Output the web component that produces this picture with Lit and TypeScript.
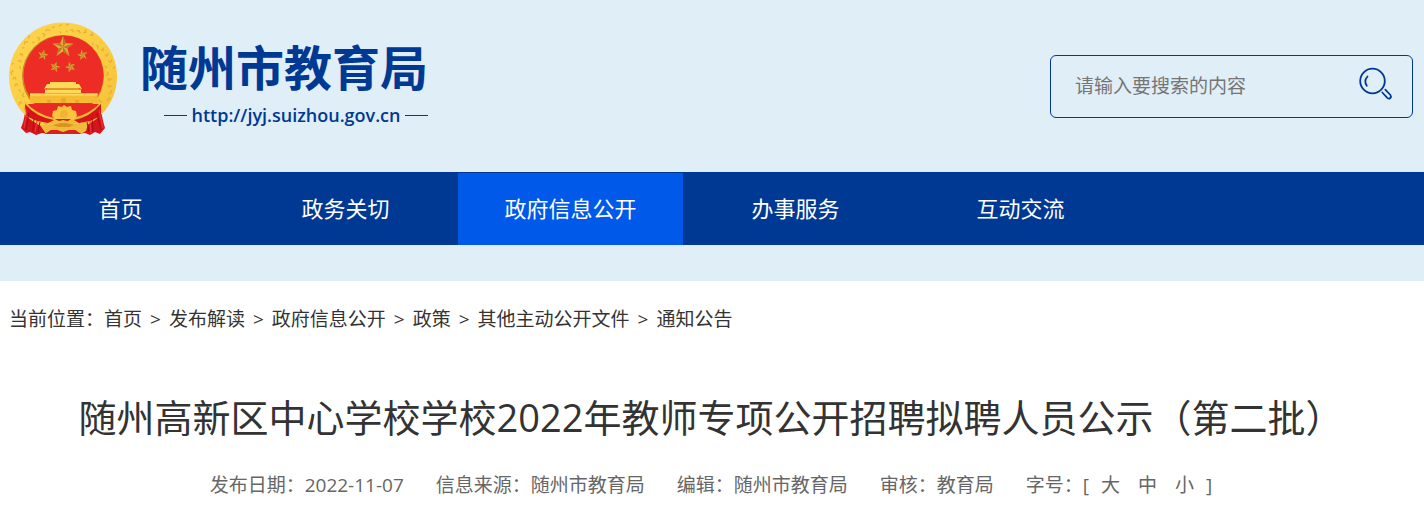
import { LitElement, html, svg, css } from "lit";
import { customElement, state } from "lit/decorators.js";

const star = (cx: number, cy: number, r: number, turn = 0) => {
  const pt = (i: number, radius: number) => {
    const a = ((i * 36 - 90 + turn) * Math.PI) / 180;
    return `${(cx + radius * Math.cos(a)).toFixed(2)},${(cy + radius * Math.sin(a)).toFixed(2)}`;
  };
  const outline = Array.from({ length: 10 }, (_, i) => pt(i, i % 2 ? r * 0.42 : r)).join(" ");
  const facets = [0, 2, 4, 6, 8].map((i) => `M${cx},${cy}L${pt(i, r)}L${pt(i + 1, r * 0.42)}Z`).join("");
  return svg`<polygon points=${outline} fill="#e2ab3a"></polygon><path d=${facets} fill="#b9781f"></path>`;
};

@customElement("national-emblem")
class NationalEmblem extends LitElement {
  static styles = css`
    :host { display: block; flex: none; }
    svg { display: block; width: 108px; height: 114px; }
  `;

  render() {
    const grains = Array.from({ length: 90 }, (_, i) => {
      const a = ((i * 47) % 360) * (Math.PI / 180) + i * 0.03;
      const r = 43 + ((i * 29) % 9);
      const p = (radius: number, d: number) =>
        `${(54 + radius * Math.cos(a + d)).toFixed(1)} ${(54 + radius * Math.sin(a + d)).toFixed(1)}`;
      return `M${p(r, 0)}L${p(r + 1.5, i % 2 ? 0.06 : -0.04)}`;
    }).join("");
    return html`<svg viewBox="0 0 108 114" aria-hidden="true">
      <defs>
        <linearGradient id="gold" x1="0" y1="0" x2="1" y2="1">
          <stop offset="0" stop-color="#fbd150"></stop>
          <stop offset=".3" stop-color="#fdd248"></stop>
          <stop offset="1" stop-color="#f5c038"></stop>
        </linearGradient>
      </defs>
      <path fill="#d8141b" d="M16 80L37 94 44 101 41 112 33 111 27 113 21 110 17 111 12 106Q17 94 16 80ZM92 80L70 94 64 101 68 112 76 111 81 113 86 110 91 112 96 106Q92 94 92 80Z"></path>
      <path fill="#e92a24" d="M36 96H72V112H36Z"></path>
      <circle cx="54" cy="54.500" r="54" fill="url(#gold)"></circle>
      <path d=${grains} stroke="#dfa42a" stroke-width="1.300" stroke-opacity=".7" fill="none"></path>
      <circle cx="54" cy="54" r="41" fill="#c98b22"></circle>
      <circle cx="54.500" cy="53.500" r="40" fill="#ec2c25"></circle>
      <path fill="#e92a24" d="M19 82H90L82 94 65 99H43L26 94Z"></path>
      <path fill="#f6bb31" d="M21 71.500H88.500V81H21Z"></path>
      <path fill="#ffd95c" d="M21 71.500H88.500V73.500H21ZM36 67.500H72V71H36ZM38 62H70L73 67 70 66H38L35 67ZM41 60H67V63H41Z"></path>
      <path fill="#e39a23" d="M38 66H70V67.500H38Z"></path>
      <path fill="#eaa929" d="M52 77Q54.500 74 57 77V81H52ZM38 78H42V81H38ZM66 78H70V81H66Z"></path>
      <path fill="#f3bb32" d="M15 79Q28 93 45 96Q54 99 64 96Q82 92 93 79L89 91Q78 101 64 101L54 98 44 101Q29 101 19 91Z"></path>
      <path fill="#f8c53c" d="M43 94L44 89 48 88 49 84 53 85 55 83 58 85 62 84 63 88 67 89 68 94 64 98H47Z"></path>
      <circle cx="55" cy="92" r="4" fill="#f0b430"></circle>
      <path fill="#d8141b" d="M16 82Q27 95 45 98L39 101 28 99 17 94ZM92 82Q81 95 65 98L70 101 81 99 92 94ZM46 97H62L58 99.500H51Z"></path>
      <path fill="#efbc39" d="M31 103Q40 104 46 100L54 98 63 100Q69 104 79 102L77 109 72 112 66 108 60 108 54 111 48 108 42 108 37 112Z"></path>
      <path fill="#d99323" d="M44 103L52 101H57L65 103 60 105H49Z"></path>
      <path fill="#df1d20" d="M36 112L42 108H48L54 110 60 108H66L72 112Z"></path>
      <path fill="none" stroke="#a90d15" d="M20 91L17 108M25 96L24 110M31 100L29 110M88 91L92 108M83 96L84 110M78 100L80 110"></path>
      <path fill="none" stroke="#f13b37" d="M18 88L15 106M28 99L26 110M90 88L94 106M81 99L82 111"></path>
      ${star(54, 25, 11)} ${star(34, 33, 5.5, 12)} ${star(73.5, 33, 5.5, -12)}
      ${star(46, 45, 5.5, 18)} ${star(61.5, 45, 5.5, -18)}
    </svg>`;
  }
}

@customElement("site-header")
class SiteHeader extends LitElement {
  static styles = css`
    :host { display: block; background: #e0eef7; padding-bottom: 36px; }
    .top {
      display: flex; justify-content: space-between; align-items: flex-start;
      padding: 22px 11px 36px 9px;
    }
    .brand { display: flex; gap: 23px; color: #003993; text-decoration: none; }
    .words { padding-top: 14px; }
    .name { font-size: 48px; line-height: 64px; font-weight: 700; white-space: nowrap; }
    .url {
      display: flex; align-items: center; gap: 5px; padding: 3px 0 0 24px;
      font-size: 18px; line-height: 24px; font-weight: 600;
    }
    .url::before, .url::after { content: ""; flex: 1; height: 1px; background: #003993; }
    .search {
      display: flex; align-items: center; box-sizing: border-box;
      width: 363px; height: 63px; margin-top: 33px; padding: 0 19px 2px 24px;
      border: 1px solid #003993; border-radius: 6px;
    }
    .box {
      flex: 1; min-width: 0; border: 0; padding: 0; outline: 0; background: none;
      font: inherit; font-size: 19px; line-height: 28px; color: #333;
    }
    .box::placeholder { color: #757575; opacity: 1; }
    .go { border: 0; padding: 0 0 6px; background: none; cursor: pointer; color: #003993; }
    .go svg { display: block; width: 36px; height: 36px; }
    .nav { background: #003993; padding: 1px 0 0 8px; }
    .list { display: flex; margin: 0; padding: 0; list-style: none; }
    .item { flex: 0 1 225px; }
    .link {
      display: block; text-align: center; color: #fff; text-decoration: none;
      padding-bottom: 2px; font-size: 22px; line-height: 70px; white-space: nowrap;
    }
    .link.active { background: #0059e8; }
  `;

  private items = ["首页", "政务关切", "政府信息公开", "办事服务", "互动交流"];

  render() {
    return html`
      <div class="top">
        <a class="brand" href="#">
          <national-emblem></national-emblem>
          <div class="words">
            <div class="name">随州市教育局</div>
            <div class="url">http://jyj.suizhou.gov.cn</div>
          </div>
        </a>
        <form class="search" role="search" @submit=${(e: Event) => e.preventDefault()}>
          <input class="box" type="text" aria-label="搜索" placeholder="请输入要搜索的内容" />
          <button class="go" type="submit" aria-label="搜索">
            <svg viewBox="0 0 36 36" fill="none" stroke="currentColor" stroke-width="1.800" stroke-linecap="round">
              <circle cx="15.500" cy="16" r="12.300"></circle>
              <path d="M10.500 11.500Q6.500 16 9.800 20.800"></path>
              <path d="M25.300 27.500L30.300 32.800Q32 34.300 33.300 33T33.400 30L28.300 24.700"></path>
            </svg>
          </button>
        </form>
      </div>
      <nav class="nav">
        <ul class="list">
          ${this.items.map(
            (t) => html`<li class="item"><a class="link ${t === "政府信息公开" ? "active" : ""}" href="#">${t}</a></li>`
          )}
        </ul>
      </nav>
    `;
  }
}

@customElement("app-root")
class AppRoot extends LitElement {
  static styles = css`
    :host {
      display: block; background: #fff; color: #333;
      font-family: "Open Sans", "Noto Sans CJK SC", sans-serif;
    }
    .main { padding: 24px 11px 20px 9px; }
    .crumbs { display: flex; flex-wrap: wrap; font-size: 19px; line-height: 28px; }
    .crumb { color: inherit; text-decoration: none; }
    .sep { padding: 0 8px; }
    .title {
      margin: 54px 0 0; text-align: center;
      font-size: 38px; line-height: 60px; font-weight: 400;
    }
    .meta {
      display: flex; flex-wrap: wrap; justify-content: center; gap: 0 32px;
      margin-top: 24px; font-size: 19px; line-height: 28px; color: #666;
    }
    .sizes { display: flex; }
    .sizes .group { display: flex; gap: 18px; padding: 0 12px; }
    .size { border: 0; padding: 0; background: none; font: inherit; color: inherit; cursor: pointer; }
  `;

  @state() private size = "中";

  private path = ["首页", "发布解读", "政府信息公开", "政策", "其他主动公开文件", "通知公告"];
  private facts = ["发布日期：2022-11-07", "信息来源：随州市教育局", "编辑：随州市教育局", "审核：教育局"];

  render() {
    return html`
      <site-header></site-header>
      <main class="main">
        <nav class="crumbs" aria-label="当前位置">
          <span>当前位置：</span>
          ${this.path.map(
            (t, i) => html`${i ? html`<span class="sep">&gt;</span>` : ""}<a class="crumb" href="#">${t}</a>`
          )}
        </nav>
        <h1 class="title">随州高新区中心学校学校2022年教师专项公开招聘拟聘人员公示（第二批）</h1>
        <div class="meta">
          ${this.facts.map((t) => html`<span>${t}</span>`)}
          <span class="sizes">
            字号：[
            <span class="group">
              ${["大", "中", "小"].map(
                (s) => html`<button
                  class="size"
                  type="button"
                  aria-pressed=${this.size === s}
                  @click=${() => (this.size = s)}
                >${s}</button>`
              )}
            </span>
            ]
          </span>
        </div>
      </main>
    `;
  }
}
